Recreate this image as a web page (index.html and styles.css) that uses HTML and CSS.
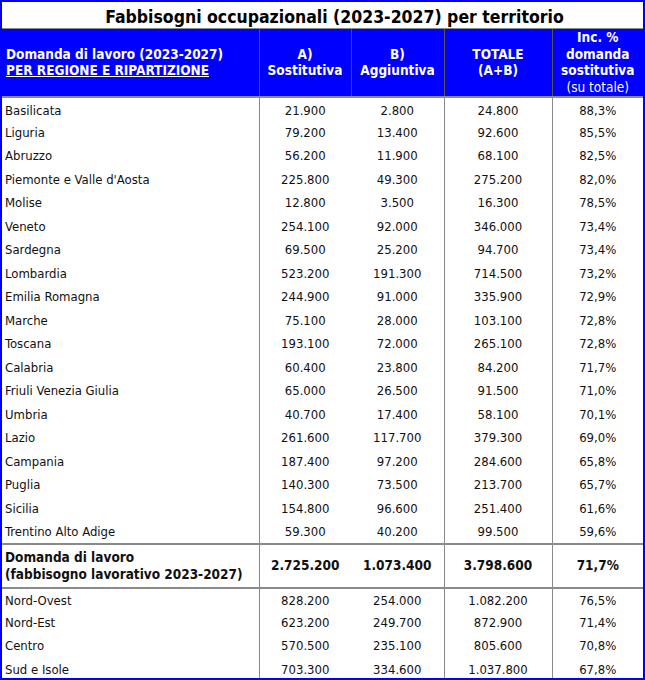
FILE: index.html
```html
<!DOCTYPE html>
<html lang="it">
<head>
<meta charset="utf-8">
<title>Fabbisogni occupazionali</title>
<link rel="stylesheet" href="styles.css">
</head>
<body>
<div class="frame">
  <table class="tab">
    <colgroup>
      <col class="c-name"><col class="c-a"><col class="c-b"><col class="c-tot"><col class="c-inc">
    </colgroup>
    <thead>
      <tr class="title-row"><th colspan="5" class="title">Fabbisogni occupazionali (2023-2027) per territorio</th></tr>
      <tr class="head-row">
        <th class="h-name">Domanda di lavoro (2023-2027)<br><u>PER REGIONE E RIPARTIZIONE</u></th>
        <th class="h-a">A)<br>Sostitutiva</th>
        <th class="h-b">B)<br>Aggiuntiva</th>
        <th class="h-tot">TOTALE<br>(A+B)</th>
        <th class="h-inc">Inc. %<br>domanda<br>sostitutiva<br><span class="light">(su totale)</span></th>
      </tr>
    </thead>
    <tbody class="regions">
      <tr><td class="name">Basilicata</td><td>21.900</td><td class="nb">2.800</td><td class="sep">24.800</td><td class="sep">88,3%</td></tr>
      <tr><td class="name">Liguria</td><td>79.200</td><td class="nb">13.400</td><td class="sep">92.600</td><td class="sep">85,5%</td></tr>
      <tr><td class="name">Abruzzo</td><td>56.200</td><td class="nb">11.900</td><td class="sep">68.100</td><td class="sep">82,5%</td></tr>
      <tr><td class="name">Piemonte e Valle d'Aosta</td><td>225.800</td><td class="nb">49.300</td><td class="sep">275.200</td><td class="sep">82,0%</td></tr>
      <tr><td class="name">Molise</td><td>12.800</td><td class="nb">3.500</td><td class="sep">16.300</td><td class="sep">78,5%</td></tr>
      <tr><td class="name">Veneto</td><td>254.100</td><td class="nb">92.000</td><td class="sep">346.000</td><td class="sep">73,4%</td></tr>
      <tr><td class="name">Sardegna</td><td>69.500</td><td class="nb">25.200</td><td class="sep">94.700</td><td class="sep">73,4%</td></tr>
      <tr><td class="name">Lombardia</td><td>523.200</td><td class="nb">191.300</td><td class="sep">714.500</td><td class="sep">73,2%</td></tr>
      <tr><td class="name">Emilia Romagna</td><td>244.900</td><td class="nb">91.000</td><td class="sep">335.900</td><td class="sep">72,9%</td></tr>
      <tr><td class="name">Marche</td><td>75.100</td><td class="nb">28.000</td><td class="sep">103.100</td><td class="sep">72,8%</td></tr>
      <tr><td class="name">Toscana</td><td>193.100</td><td class="nb">72.000</td><td class="sep">265.100</td><td class="sep">72,8%</td></tr>
      <tr><td class="name">Calabria</td><td>60.400</td><td class="nb">23.800</td><td class="sep">84.200</td><td class="sep">71,7%</td></tr>
      <tr><td class="name">Friuli Venezia Giulia</td><td>65.000</td><td class="nb">26.500</td><td class="sep">91.500</td><td class="sep">71,0%</td></tr>
      <tr><td class="name">Umbria</td><td>40.700</td><td class="nb">17.400</td><td class="sep">58.100</td><td class="sep">70,1%</td></tr>
      <tr><td class="name">Lazio</td><td>261.600</td><td class="nb">117.700</td><td class="sep">379.300</td><td class="sep">69,0%</td></tr>
      <tr><td class="name">Campania</td><td>187.400</td><td class="nb">97.200</td><td class="sep">284.600</td><td class="sep">65,8%</td></tr>
      <tr><td class="name">Puglia</td><td>140.300</td><td class="nb">73.500</td><td class="sep">213.700</td><td class="sep">65,7%</td></tr>
      <tr><td class="name">Sicilia</td><td>154.800</td><td class="nb">96.600</td><td class="sep">251.400</td><td class="sep">61,6%</td></tr>
      <tr><td class="name">Trentino Alto Adige</td><td>59.300</td><td class="nb">40.200</td><td class="sep">99.500</td><td class="sep">59,6%</td></tr>
    </tbody>
    <tbody class="total">
      <tr><td class="name">Domanda di lavoro<br>(fabbisogno lavorativo 2023-2027)</td><td>2.725.200</td><td class="nb">1.073.400</td><td class="sep">3.798.600</td><td class="sep">71,7%</td></tr>
    </tbody>
    <tbody class="areas">
      <tr><td class="name">Nord-Ovest</td><td>828.200</td><td class="nb">254.000</td><td class="sep">1.082.200</td><td class="sep">76,5%</td></tr>
      <tr><td class="name">Nord-Est</td><td>623.200</td><td class="nb">249.700</td><td class="sep">872.900</td><td class="sep">71,4%</td></tr>
      <tr><td class="name">Centro</td><td>570.500</td><td class="nb">235.100</td><td class="sep">805.600</td><td class="sep">70,8%</td></tr>
      <tr><td class="name">Sud e Isole</td><td>703.300</td><td class="nb">334.600</td><td class="sep">1.037.800</td><td class="sep">67,8%</td></tr>
    </tbody>
  </table>
</div>
</body>
</html>
```

FILE: styles.css
```css
* { box-sizing: border-box; }
html, body { margin: 0; padding: 0; background: #fff; }
.frame {
  width: 645px;
  height: 680px;
  border: 2px solid #0000ff;
  overflow: hidden;
  font-family: "DejaVu Sans Condensed", "DejaVu Sans", sans-serif;
  color: #111;
}
.tab {
  width: 641px;
  border-collapse: collapse;
  table-layout: fixed;
}
.c-name { width: 257px; }
.c-a { width: 92px; }
.c-b { width: 93px; }
.c-tot { width: 108px; }
.c-inc { width: 91px; }

.title-row th {
  height: 26px;
  padding: 0 0 1px 0;
  font-size: 17.5px;
  font-weight: bold;
  text-align: center;
  color: #000;
  vertical-align: bottom;
  border-bottom: 1px solid #8a8a8a;
}
.title { padding-left: 24px !important; }

.head-row th {
  height: 69px;
  background: #0000ff;
  color: #fff;
  font-size: 13.5px;
  font-weight: bold;
  line-height: 16.5px;
  text-align: center;
  vertical-align: middle;
  padding: 0;
  border-bottom: 2px solid #8a8a8a;
}
.head-row .h-name { text-align: left; padding-left: 4px; border-right: 1px solid #555; }
.head-row .h-a { border-right: 1px solid #3a3aff; }
.head-row .h-b { border-right: 1px solid #555; }
.head-row .h-tot { border-right: 1px solid #555; }
.light { font-weight: normal; }

td {
  font-size: 13px;
  text-align: center;
  padding: 0;
  white-space: nowrap;
}
td.name { text-align: left; padding-left: 3px; border-right: 1px solid #8a8a8a; }
td.sep { border-left: 1px solid #8a8a8a; }
td.nb { border-left: 0; }

.regions td { height: 23.5px; }
.regions tr:first-child td { padding-top: 2px; }

.total td {
  height: 44px;
  font-weight: bold;
  font-size: 13.5px;
  border-top: 2px solid #8a8a8a;
  border-bottom: 2px solid #8a8a8a;
  line-height: 17px;
}
.areas td { height: 23.4px; }
.areas tr:first-child td { padding-top: 2px; }
```
